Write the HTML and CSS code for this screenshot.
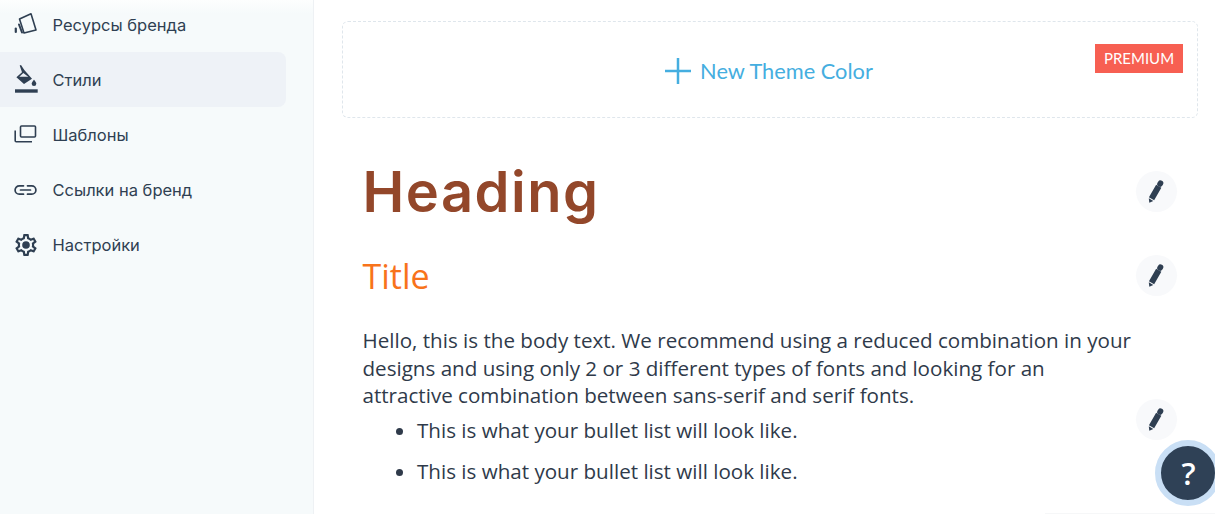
FILE: index.html
```html
<!DOCTYPE html>
<html lang="ru">
<head>
<meta charset="utf-8">
<title>Стили</title>
<link rel="stylesheet" href="styles.css">
</head>
<body>
<div class="app">
  <aside class="sidebar">
    <nav class="menu">
      <a class="item">
        <svg class="ico" viewBox="0 0 24 24"><g fill="none" stroke="#2f3f52" stroke-linejoin="round" stroke-linecap="round"><path d="M5.500 6 17 .8 22 17 10 20Z" stroke-width="1.600"/><path d="M5 11.500 8 19.500" stroke-width="2"/><path d="M1.800 15.500v3.500" stroke-width="2.200"/></g></svg>
        <span>Ресурсы бренда</span>
      </a>
      <a class="item active">
        <svg class="ico" viewBox="0 0 24 24"><path d="M1 21.300h22.700v3.400H1z" fill="#2f3f52"/><path d="M5.700-2.500 7-3l3.300 5 7.700 8.700L10 16 2.400 9.300 8 4.300z" fill="#2f3f52"/><path d="M5.300 8.800 9.300 5l5 3.800z" fill="#eef2f7"/><path d="M20 11.800s2.300 2.500 2.300 3.900a2.300 2.300 0 0 1-4.600 0c0-1.400 2.300-3.900 2.300-3.900z" fill="#2f3f52"/></svg>
        <span>Стили</span>
      </a>
      <a class="item">
        <svg class="ico" viewBox="0 0 24 24"><g fill="none" stroke="#2f3f52" stroke-width="1.600" stroke-linejoin="round"><rect x="6.500" y="3" width="15" height="11" rx="1"/><path d="M1.200 7.500v10.300c0 .6.400 1 1 1H18"/></g></svg>
        <span>Шаблоны</span>
      </a>
      <a class="item">
        <svg class="ico" viewBox="0 0 24 24"><g fill="none" stroke="#2f3f52" stroke-width="1.700" stroke-linecap="round"><path d="M9.500 7.800H5.300a4.200 4.200 0 0 0 0 8.400h4.200"/><path d="M13.500 7.800h4.200a4.200 4.200 0 0 1 0 8.400h-4.200"/><path d="M6.500 12h10"/></g></svg>
        <span>Ссылки на бренд</span>
      </a>
      <a class="item">
        <svg class="ico" viewBox="1 1 22 22"><path fill="#2f3f52" d="M19.430 12.980c.040-.320.070-.640.070-.980 0-.340-.030-.660-.070-.980l2.110-1.650c.190-.150.240-.420.120-.640l-2-3.460c-.090-.160-.260-.250-.440-.250-.060 0-.120.010-.170.030l-2.490 1c-.520-.400-1.080-.730-1.690-.980l-.380-2.650C14.460 2.180 14.250 2 14 2h-4c-.250 0-.460.180-.490.420l-.380 2.650c-.610.250-1.170.590-1.690.980l-2.490-1c-.060-.020-.120-.030-.180-.030-.170 0-.340.090-.430.250l-2 3.460c-.130.220-.070.490.120.640l2.110 1.650c-.040.320-.070.650-.070.980 0 .330.030.660.070.980l-2.110 1.650c-.190.150-.240.420-.120.640l2 3.460c.090.160.260.250.440.250.060 0 .120-.010.170-.030l2.490-1c.520.400 1.080.730 1.690.980l.380 2.650c.030.240.240.420.490.420h4c.250 0 .460-.180.490-.420l.380-2.650c.610-.250 1.170-.590 1.690-.980l2.490 1c.060.020.120.030.180.030.170 0 .340-.090.430-.250l2-3.460c.120-.220.070-.490-.120-.640l-2.110-1.650zm-1.980-1.710c.040.310.050.520.050.730 0 .210-.020.430-.050.730l-.140 1.130.890.700 1.080.840-.700 1.210-1.270-.510-1.040-.420-.900.680c-.430.320-.840.560-1.250.730l-1.060.430-.160 1.130-.200 1.350h-1.400l-.190-1.350-.160-1.130-1.060-.430c-.430-.180-.830-.410-1.230-.710l-.910-.700-1.060.430-1.270.510-.700-1.210 1.080-.840.890-.700-.140-1.130c-.030-.310-.050-.540-.050-.740s.020-.430.050-.730l.140-1.130-.890-.700-1.080-.840.700-1.210 1.270.510 1.040.420.900-.680c.430-.320.840-.560 1.250-.730l1.060-.430.160-1.130.200-1.350h1.390l.190 1.350.160 1.130 1.060.430c.430.180.830.410 1.230.710l.910.700 1.060-.430 1.270-.510.700 1.210-1.070.850-.89.700.140 1.130zM12 8.500a3.500 3.500 0 1 0 0 7 3.500 3.500 0 0 0 0-7z"/></svg>
        <span>Настройки</span>
      </a>
    </nav>
  </aside>
  <main class="content">
    <section class="new-color">
      <svg class="plus" viewBox="0 0 28 28"><path d="M14 1v26M1 14h26" fill="none" stroke="#45aee0" stroke-width="2.500"/></svg>
      <span>New Theme Color</span>
      <span class="premium">PREMIUM</span>
    </section>
    <section class="style-row row-heading">
      <h1 class="heading">Heading</h1>
      <button class="edit"><svg viewBox="0 0 24 24"><path d="M4.300 22.700 3.780 18.370 8.300 20.950zM3.940 17.300 11.140 4.710 16.340 7.690 9.140 20.280z" fill="#2f3f52"/><path d="M15 4 15.500 3.200" stroke="#2f3f52" stroke-width="5.600" stroke-linecap="round"/></svg></button>
    </section>
    <section class="style-row row-title">
      <h2 class="title">Title</h2>
      <button class="edit"><svg viewBox="0 0 24 24"><path d="M4.300 22.700 3.780 18.370 8.300 20.950zM3.940 17.300 11.140 4.710 16.340 7.690 9.140 20.280z" fill="#2f3f52"/><path d="M15 4 15.500 3.200" stroke="#2f3f52" stroke-width="5.600" stroke-linecap="round"/></svg></button>
    </section>
    <section class="style-row row-body">
      <div class="body-text">
        <p>Hello, this is the body text. We recommend using a reduced combination in your designs and using only 2 or 3 different types of fonts and looking for an attractive combination between sans-serif and serif fonts.</p>
        <ul>
          <li>This is what your bullet list will look like.</li>
          <li>This is what your bullet list will look like.</li>
        </ul>
      </div>
      <button class="edit"><svg viewBox="0 0 24 24"><path d="M4.300 22.700 3.780 18.370 8.300 20.950zM3.940 17.300 11.140 4.710 16.340 7.690 9.140 20.280z" fill="#2f3f52"/><path d="M15 4 15.500 3.200" stroke="#2f3f52" stroke-width="5.600" stroke-linecap="round"/></svg></button>
    </section>
  </main>
</div>
<div class="edge"></div>
<button class="help">?</button>
</body>
</html>
```
FILE: styles.css
```css
* { box-sizing: border-box; }
html, body { margin: 0; height: 100%; overflow: hidden; background: #fff; }
.app { display: flex; height: 514px; }
.sidebar { width: 314px; flex: none; background: linear-gradient(#fdfefe 0, #f6fafb 14px); border-right: 1px solid #eef1f4; }
.menu { display: flex; flex-direction: column; margin-top: -3px; width: 286px; }
.item { display: flex; align-items: center; gap: 14.500px; height: 55px; padding-left: 14px; border-radius: 0 8px 8px 0; font: 400 16.500px/20px Inter, sans-serif; color: #2f3f52; }
.item.active { background: #eef2f7; }
.ico { width: 24px; height: 24px; flex: none; overflow: visible; }
.content { flex: 1; padding: 21px 17px 0 28px; min-width: 0; }
.new-color { position: relative; display: flex; align-items: center; justify-content: center; gap: 8px; height: 97px; padding: 2px 3px 0 0; border: 1px dashed #dfe6ec; border-radius: 6px; font: 400 21.800px/28px Lato, sans-serif; color: #45aee0; }
.plus { width: 28px; height: 28px; }
.premium { position: absolute; top: 22px; right: 14px; width: 88px; height: 29px; background: #f75f52; color: #fff; font: 400 15px/29px Lato, sans-serif; text-align: center; }
.style-row { position: relative; padding-left: 20.500px; padding-right: 20px; }
.edit { position: absolute; right: 21px; width: 41px; height: 41px; border: 0; border-radius: 50%; background: #f8f9fb; display: flex; align-items: center; justify-content: center; padding: 0; }
.edit svg { width: 24px; height: 24px; overflow: visible; }
.row-heading { height: 138px; padding-top: 32px; }
.row-heading .edit { top: 53px; }
.heading { margin: 0; font: 600 56px/84px Inter, sans-serif; letter-spacing: 1.500px; color: #93472a; }
.row-title { height: 43px; }
.row-title .edit { top: -1px; }
.title { margin: 0; font: 400 34px/40px "Open Sans", sans-serif; color: #f8731b; }
.row-body { padding-top: 28px; }
.body-text { font: 400 20.600px/27.500px "Open Sans", sans-serif; color: #2f3a4a; width: 775px; }
.body-text p { margin: 0; }
.body-text ul { margin: 0; padding-left: 54.500px; }
.body-text li { margin-top: 7px; margin-bottom: 14px; }
.row-body .edit { top: 100px; }
.edge { position: fixed; right: 0; bottom: 0; width: 170px; height: 1px; background: #f6f7f8; }
.help { position: fixed; left: 1155px; top: 440px; width: 66px; height: 66px; padding: 0 0 0 1px; border-radius: 50%; border: 6px solid #c9dff5; background: #2f4156; color: #fff; font: 600 31px/54px "Open Sans", sans-serif; text-align: center; }
```
